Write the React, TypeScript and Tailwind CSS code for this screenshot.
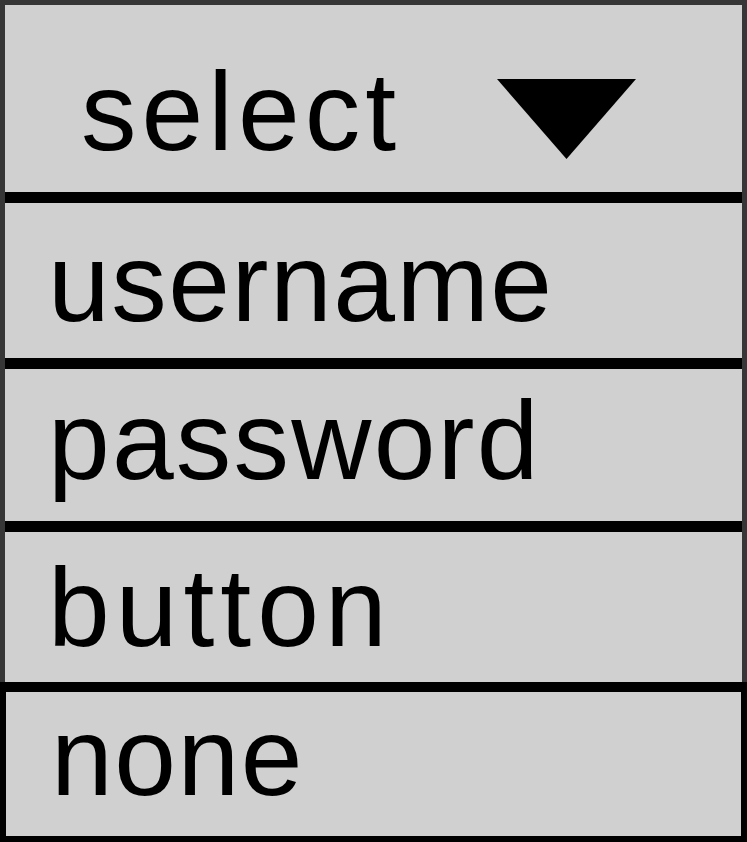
export default function App() {
  const options = [
    { label: "username", h: "h-[130px]", pt: "pt-[25px]", tr: "tracking-[1.5px]" },
    { label: "password", h: "h-[135px]", pt: "pt-[17px]", tr: "tracking-[2.2px]" },
    { label: "button", h: "h-[129px]", pt: "pt-[21px]", tr: "tracking-[6px]" },
  ];

  return (
    <div className="w-[747px] h-[842px] flex flex-col bg-[#d0d0d0] text-black font-['Liberation_Sans',Arial,sans-serif] text-[111px] leading-none tracking-[1.5px]">
      {/* select header + options */}
      <div className="flex flex-col border-t-[5px] border-x-[5px] border-[#363636]">
        <div className="h-[187px] flex items-start justify-between pl-[76px] pr-[106px]">
          <span className="mt-[52px] tracking-[5px]">select</span>
          <svg width="139" height="80" viewBox="0 0 139 80" className="mt-[74px]">
            <polygon points="0,0 139,0 69.5,80" fill="#000" />
          </svg>
        </div>
        {options.map((o) => (
          <div
            key={o.label}
            className={`${o.h} ${o.pt} box-content flex items-start pl-[43px] border-t-[11px] border-black`}
          >
            <span className={o.tr}>{o.label}</span>
          </div>
        ))}
      </div>
      {/* none option */}
      <div className="h-[134px] pt-[10px] box-content flex items-start pl-[45px] border-t-[10px] border-x-[6px] border-b-[6px] border-black">
        <span>none</span>
      </div>
    </div>
  );
}
